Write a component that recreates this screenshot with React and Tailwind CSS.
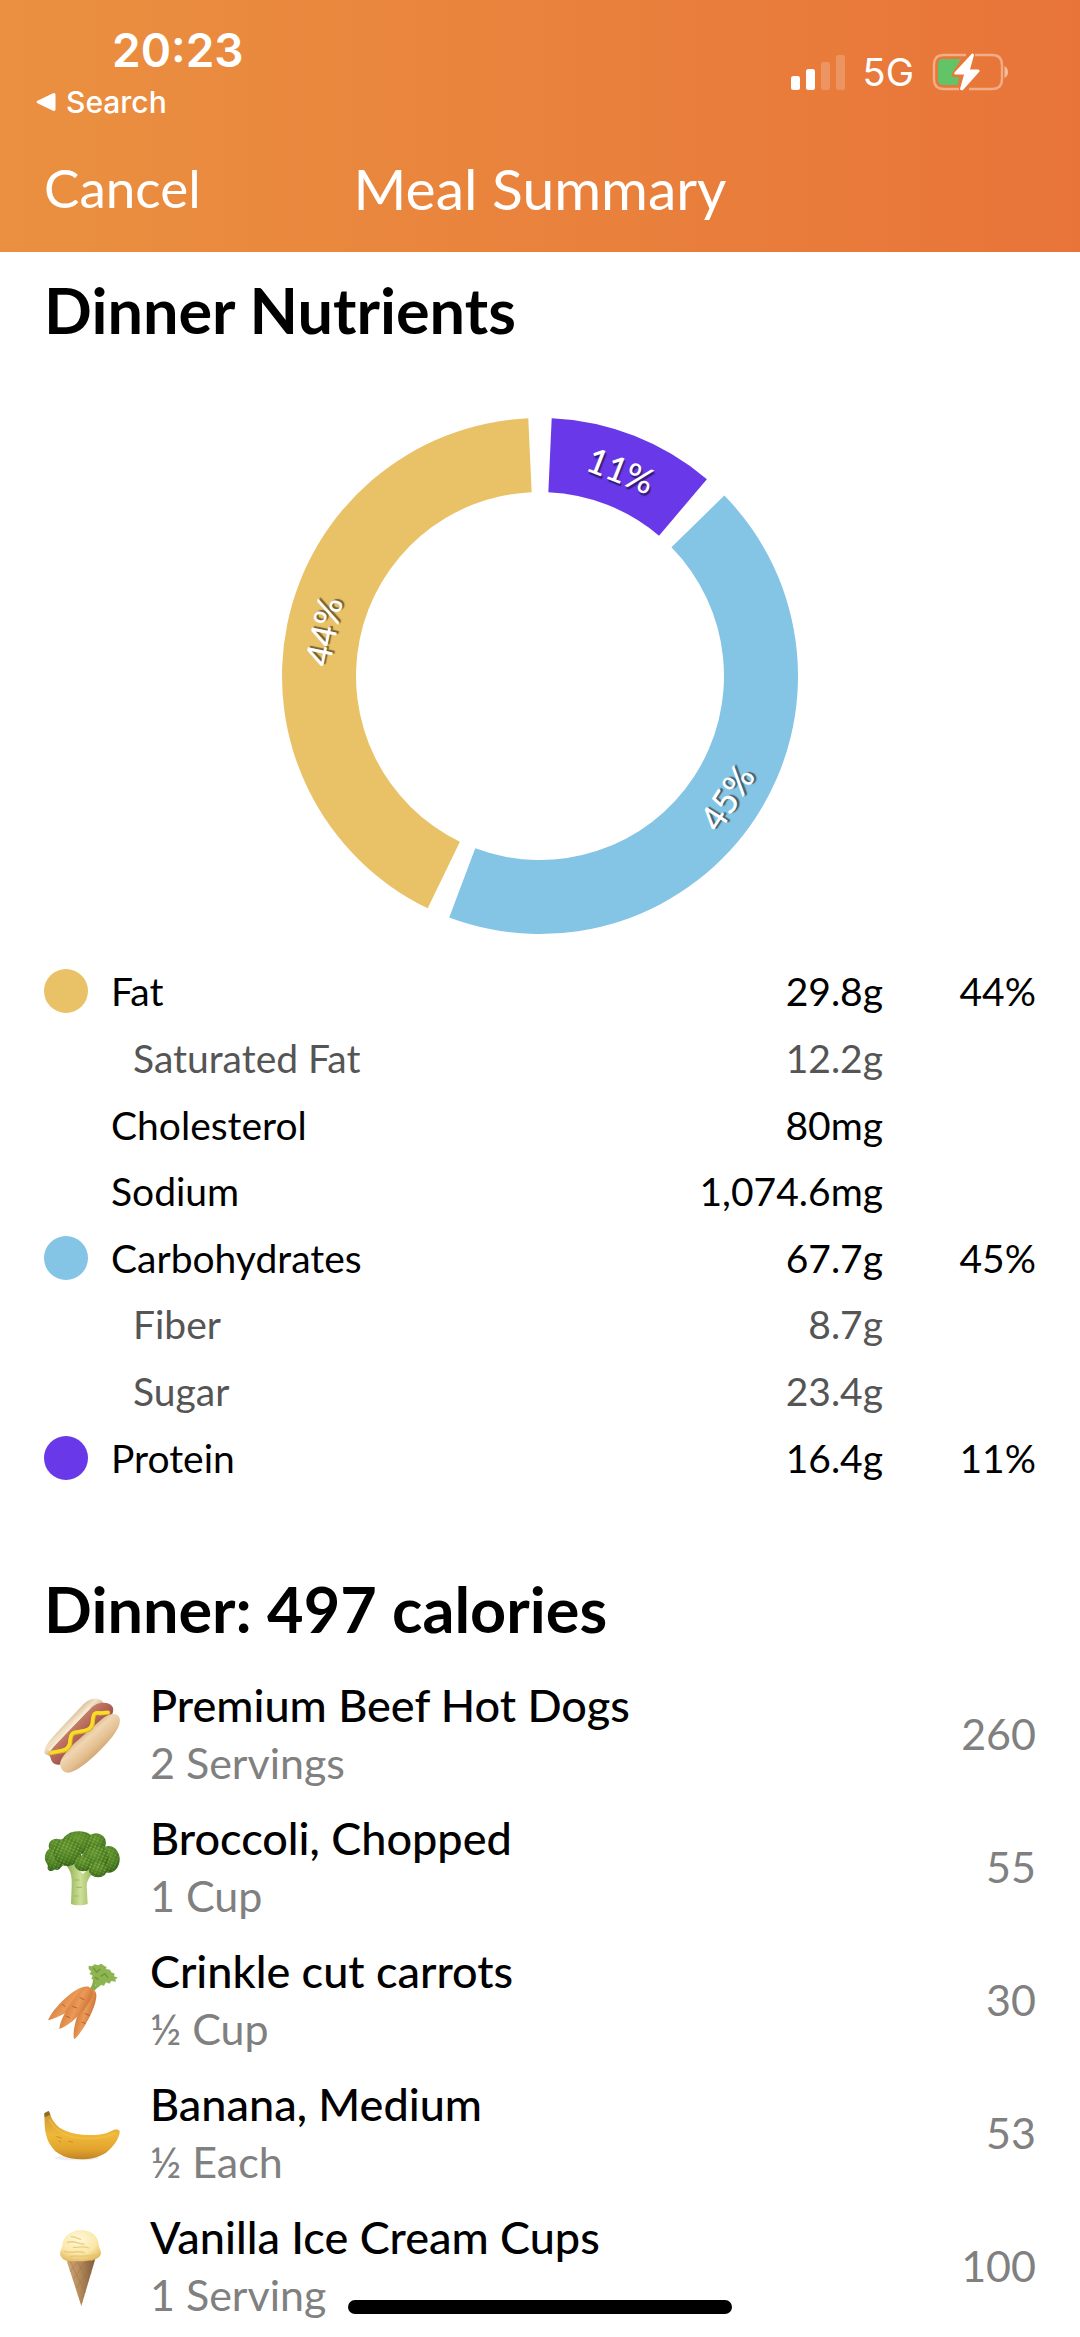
import clsx from 'clsx';

const NUTRIENTS = [
  { name: 'Fat', amount: '29.8g', percent: '44%', dot: 'bg-[#e9c267]' },
  { name: 'Saturated Fat', amount: '12.2g', sub: true },
  { name: 'Cholesterol', amount: '80mg' },
  { name: 'Sodium', amount: '1,074.6mg' },
  { name: 'Carbohydrates', amount: '67.7g', percent: '45%', dot: 'bg-[#84c4e5]' },
  { name: 'Fiber', amount: '8.7g', sub: true },
  { name: 'Sugar', amount: '23.4g', sub: true },
  { name: 'Protein', amount: '16.4g', percent: '11%', dot: 'bg-[#6938e8]' },
];

// Angles are in degrees, clockwise from the top
const SLICES = [
  { label: '11%', from: 2.6, to: 40.3, color: '#6938e8', rotate: 21.5 },
  { label: '45%', from: 45.6, to: 200.6, color: '#84c4e5', rotate: -57 },
  { label: '44%', from: 205.8, to: 357.4, color: '#e9c267', rotate: -78.5 },
];

const OUTER = 258;
const INNER = 184;

const point = (angle, r) => {
  const rad = (angle * Math.PI) / 180;
  return [r * Math.sin(rad), -r * Math.cos(rad)];
};

const slicePath = (from, to) => {
  const large = to - from > 180 ? 1 : 0;
  return `M${point(from, OUTER)}A${OUTER} ${OUTER} 0 ${large} 1 ${point(to, OUTER)}L${point(to, INNER)}A${INNER} ${INNER} 0 ${large} 0 ${point(from, INNER)}Z`;
};

function NutrientChart() {
  return (
    <svg viewBox="-260 -260 520 520" className="w-[520px] mx-auto mt-19" role="img" aria-label="Nutrient breakdown">
      {SLICES.map(({ label, from, to, color, rotate }) => {
        const [x, y] = point((from + to) / 2, 222);
        return (
          <g key={label}>
            <path d={slicePath(from, to)} fill={color} />
            <g transform={`translate(${x} ${y})`}>
              <text
                transform={`rotate(${rotate})`}
                textAnchor="middle"
                dominantBaseline="central"
                className="fill-white text-[35px] font-medium [text-shadow:2px_2px_1px_rgba(0,0,0,0.5)]"
              >
                {label}
              </text>
            </g>
          </g>
        );
      })}
    </svg>
  );
}

function HotDog() {
  return (
    <svg viewBox="42 55 228 228" className="size-[76px]" aria-hidden="true">
      <defs>
        <linearGradient id="bunBack" x1="0" y1="0" x2="1" y2="1">
          <stop offset="0.3" stopColor="#c9a77d" />
          <stop offset="0.42" stopColor="#f3e3c8" />
          <stop offset="0.55" stopColor="#c99b6b" />
        </linearGradient>
        <linearGradient id="bunFront" x1="0.25" y1="0.25" x2="0.75" y2="0.8">
          <stop offset="0" stopColor="#c08b58" />
          <stop offset="0.35" stopColor="#efd6b2" />
          <stop offset="0.6" stopColor="#e4bf90" />
          <stop offset="1" stopColor="#b98552" />
        </linearGradient>
        <linearGradient id="sausage" x1="0.3" y1="0.3" x2="0.7" y2="0.7">
          <stop offset="0" stopColor="#d08a70" />
          <stop offset="1" stopColor="#8e3b3c" />
        </linearGradient>
      </defs>
      <path d="M44 222C38 205 60 180 88 150L160 74C178 56 200 54 214 62L232 84L80 240Z" fill="url(#bunBack)" />
      <path d="M62 236C56 222 64 208 80 190L184 84C200 68 236 62 248 82C254 96 244 112 230 124L98 250C86 260 66 256 62 236Z" fill="url(#sausage)" />
      <path d="M58 210L178 84" stroke="#f6ead2" strokeWidth="7" strokeLinecap="round" />
      <path d="M92 262C84 246 104 222 130 194L216 118C238 98 264 98 269 116C274 140 250 170 222 200C190 234 150 270 122 278C106 282 96 274 92 262Z" fill="url(#bunFront)" />
      <path d="M64 220C92 212 110 220 120 194C122 168 124 158 144 158C164 154 184 154 188 132C190 100 194 98 210 101L234 99" fill="none" stroke="#e0b41a" strokeWidth="13" strokeLinecap="round" strokeLinejoin="round" />
      <path d="M64 219C92 210 110 218 119 192C121 166 124 156 144 156C164 152 183 152 187 130C189 99 194 97 210 100L234 98" fill="none" stroke="#f8dc2c" strokeWidth="10" strokeLinecap="round" strokeLinejoin="round" />
    </svg>
  );
}

function Broccoli() {
  return (
    <svg viewBox="42 63 228 228" className="size-[76px]" aria-hidden="true">
      <defs>
        <linearGradient id="stem">
          <stop offset="0" stopColor="#84a946" />
          <stop offset="0.5" stopColor="#cfdf98" />
          <stop offset="1" stopColor="#8db04f" />
        </linearGradient>
        <radialGradient id="floret" cx="0.45" cy="0.3" r="0.7">
          <stop offset="0" stopColor="#6b9b35" />
          <stop offset="0.65" stopColor="#4c8023" />
          <stop offset="1" stopColor="#335f17" />
        </radialGradient>
        <pattern id="buds" width="11" height="9" patternUnits="userSpaceOnUse" patternTransform="rotate(24)">
          <circle cx="3" cy="2" r="1.9" fill="#86b049" />
          <circle cx="8" cy="6" r="1.5" fill="#3d6d1b" />
        </pattern>
      </defs>
      <path d="M106 164C124 182 126 200 125 230L123 282C134 287 160 287 173 282L170 226C172 206 184 194 196 182L176 176L158 192L140 166Z" fill="url(#stem)" />
      <path d="M132 210h16M138 232h18M132 258h14" stroke="#9cb765" strokeWidth="3" />
      {['url(#floret)', 'url(#buds)'].map(fill => (
        <g key={fill} fill={fill}>
          <ellipse cx="80" cy="108" rx="24" ry="22" />
          <path d="M45 150C42 122 62 108 84 112L104 160C92 172 86 186 74 178C66 188 48 182 54 168Z" />
          <ellipse cx="146" cy="98" rx="50" ry="34" />
          <ellipse cx="198" cy="98" rx="30" ry="28" />
          <ellipse cx="112" cy="126" rx="42" ry="42" />
          <ellipse cx="236" cy="148" rx="33" ry="40" />
          <ellipse cx="196" cy="142" rx="40" ry="36" />
          <ellipse cx="160" cy="160" rx="28" ry="24" />
          <ellipse cx="204" cy="178" rx="28" ry="24" />
        </g>
      ))}
    </svg>
  );
}

function Carrots() {
  return (
    <svg viewBox="42 57 228 228" className="size-[76px]" aria-hidden="true">
      <defs>
        <linearGradient id="carrot" x1="0" y1="0.2" x2="1" y2="0.8">
          <stop offset="0.1" stopColor="#c66f32" />
          <stop offset="0.5" stopColor="#ec9a57" />
          <stop offset="0.9" stopColor="#b85d24" />
        </linearGradient>
      </defs>
      <path d="M186 130C194 112 204 98 220 78M192 132C206 116 222 106 240 100M188 128C194 112 196 100 196 78" fill="none" stroke="#84ad4b" strokeWidth="9" strokeLinecap="round" />
      <path d="M176 62l10 2 8-6 10 3 10-5 8 6 8 4-2 6 12 2 4 8 10 4-2 8 12 4-8 5 2 7-14-2-6 8-10-4-6 10-10-2-8 8-8-10-2-12-10-4 4-10-10-6 6-6-8-8Z" fill="#8fb552" />
      <path d="M190 68l10 14 10-10M212 94l12-8 10 12M194 96l12 8" fill="none" stroke="#6d963a" strokeWidth="4" />
      <path d="M178 126C158 120 130 138 106 160C84 180 62 206 54 226C70 224 106 206 130 190L172 158Z" fill="url(#carrot)" />
      <path d="M186 132C196 134 202 146 198 162C194 188 176 224 158 252C148 268 136 282 132 282C128 266 134 234 144 208Z" fill="url(#carrot)" />
      <path d="M182 128C196 134 188 156 176 174C158 204 120 240 88 252C88 236 104 200 124 174C144 148 164 126 182 128Z" fill="url(#carrot)" />
      <path d="M150 158l12 6M128 184l12 5M166 206l12 5M156 232l9 3M98 178l7 7M110 214l9 4" stroke="#b65f29" strokeWidth="3" strokeLinecap="round" />
    </svg>
  );
}

function Banana() {
  return (
    <svg viewBox="42 51 228 228" className="size-[76px]" aria-hidden="true">
      <defs>
        <linearGradient id="banana" x1="0" y1="0" x2="0" y2="1">
          <stop offset="0" stopColor="#c89431" />
          <stop offset="0.5" stopColor="#efb83a" />
          <stop offset="0.8" stopColor="#e2a42e" />
          <stop offset="1" stopColor="#c08323" />
        </linearGradient>
      </defs>
      <ellipse cx="140" cy="234" rx="66" ry="7" fill="#eeeeee" />
      <path d="M43 100L56 93C62 104 62 112 72 126C90 152 126 164 176 165C210 166 234 160 250 150C258 148 268 148 269 154C270 172 252 200 228 218C196 240 138 244 100 228C64 214 46 178 44 136Z" fill="url(#banana)" />
      <path d="M58 118C76 154 116 176 176 176C214 176 240 168 258 158" fill="none" stroke="#f3c54c" strokeWidth="6" opacity="0.5" />
      <path d="M43 100L56 93L61 104L44 112Z" fill="#8f6a2a" />
      <path d="M80 170l14 4M116 184l12 2M86 182l6 5" stroke="#c98f28" strokeWidth="3" strokeLinecap="round" />
    </svg>
  );
}

function IceCream() {
  return (
    <svg viewBox="42 60 228 228" className="size-[76px]" aria-hidden="true">
      <defs>
        <radialGradient id="scoop" cx="0.45" cy="0.3" r="0.75">
          <stop offset="0" stopColor="#fff8dc" />
          <stop offset="0.6" stopColor="#fae8a8" />
          <stop offset="1" stopColor="#e2b65c" />
        </radialGradient>
        <linearGradient id="cone">
          <stop offset="0" stopColor="#d0aa78" />
          <stop offset="0.45" stopColor="#b68c5c" />
          <stop offset="1" stopColor="#7d5a38" />
        </linearGradient>
      </defs>
      <path d="M108 146L196 146L154 288Z" fill="url(#cone)" />
      <path d="M120 152l46 96M142 152l32 64M164 152l20 38M190 156l-50 78M168 152l-38 56M144 152l-24 34" stroke="#96704a" strokeWidth="2" opacity="0.6" />
      <path d="M92 138C86 124 98 118 97 102C102 76 126 60 154 60C184 60 206 80 206 104C208 118 218 126 210 138C202 148 194 148 186 152C172 150 162 156 150 154C136 152 124 156 112 152C102 152 96 146 92 138Z" fill="url(#scoop)" />
      <path d="M124 80c12 0 18 6 28 8M112 98c20-10 30 6 50 4M130 112c16 2 30-6 46 2M104 124c18 8 40-4 58 4M120 140c20-6 46 4 76-6" fill="none" stroke="#e6c46c" strokeWidth="4" strokeLinecap="round" opacity="0.8" />
    </svg>
  );
}

const FOODS = [
  { name: 'Premium Beef Hot Dogs', serving: '2 Servings', calories: 260, Icon: HotDog },
  { name: 'Broccoli, Chopped', serving: '1 Cup', calories: 55, Icon: Broccoli },
  { name: 'Crinkle cut carrots', serving: '½ Cup', calories: 30, Icon: Carrots },
  { name: 'Banana, Medium', serving: '½ Each', calories: 53, Icon: Banana },
  { name: 'Vanilla Ice Cream Cups', serving: '1 Serving', calories: 100, Icon: IceCream },
];

function StatusBar() {
  return (
    <div className="flex items-center justify-between pt-5 pl-9 pr-[72px] font-[Inter,sans-serif]">
      <div>
        <p className="pl-[76px] text-[46px] leading-[60px] font-semibold">20:23</p>
        <a href="#search" className="mt-1 flex items-center gap-[10px] text-[30px] leading-9 font-medium">
          <svg viewBox="0 0 20 20" className="size-5" fill="currentColor" aria-hidden="true">
            <path d="M1.5 8.8L17 1.2Q19.5 0.5 19.5 3V17Q19.5 19.5 17 18.8L1.5 11.2Q-0.5 10 1.5 8.8Z" />
          </svg>
          Search
        </a>
      </div>
      <div className="flex items-center pt-1">
        <svg viewBox="0 0 54 35" className="h-[35px] w-[54px]" fill="#fff" aria-hidden="true">
          <rect x="0" y="21" width="9" height="14" rx="2.5" />
          <rect x="15" y="14" width="9" height="21" rx="2.5" />
          <rect x="30" y="7" width="9" height="28" rx="2.5" opacity="0.2" />
          <rect x="45" y="0" width="9" height="35" rx="2.5" opacity="0.2" />
        </svg>
        <span className="ml-[18px] text-[38px] leading-10">5G</span>
        <svg viewBox="0 0 76 38" className="ml-[18px] h-[38px] w-[76px]" aria-hidden="true">
          <path d="M34 2H12Q2 2 2 12V26Q2 36 12 36H27M43 2H60Q70 2 70 12V26Q70 36 60 36H37" fill="none" stroke="#fff" strokeOpacity="0.4" strokeWidth="2.4" />
          <path d="M72.5 13Q76 15 76 19T72.5 25Z" fill="#fff" opacity="0.5" />
          <path d="M11 6H29L20 21Q19 24 22 24H27L26 32H11Q6 32 6 27V11Q6 6 11 6Z" fill="#62c466" />
          <path d="M40 0.5L22.5 19.5Q21.5 21.5 24 21.5H32L28 36Q28.5 38 31 37L47.5 18.5Q48 16.5 46 16.5H38L42 2Q42 0 40 0.5Z" fill="#fff" />
        </svg>
      </div>
    </div>
  );
}

export default function App() {
  return (
    <div className="relative min-h-screen bg-white text-black font-[Lato,sans-serif]">
      <header className="bg-linear-to-r from-[#ea9040] to-[#e87439] text-white">
        <StatusBar />
        <nav className="grid h-33 grid-cols-[1fr_auto_1fr] items-center px-11 pt-1">
          <button type="button" className="justify-self-start text-[53px] leading-16">Cancel</button>
          <h1 className="text-[57px] leading-16">Meal Summary</h1>
        </nav>
      </header>

      <main className="px-11">
        <section className="pt-7">
          <h2 className="text-[63px] leading-[60px] font-bold">Dinner Nutrients</h2>
          <NutrientChart />
          <table className="mt-[22px] h-[533px] w-full text-[39px] leading-12">
            <tbody>
              {NUTRIENTS.map(({ name, amount, percent, dot, sub }) => (
                <tr key={name} className={clsx(sub && 'text-[#555]')}>
                  <td className="w-[67px] p-0">{dot && <div className={clsx('size-11 rounded-full', dot)} />}</td>
                  <th scope="row" className={clsx('p-0 text-left font-normal', sub && 'pl-[22px]')}>{name}</th>
                  <td className="p-0 text-right">{amount}</td>
                  <td className="w-[153px] p-0 text-right">{percent}</td>
                </tr>
              ))}
            </tbody>
          </table>
        </section>

        <section className="pt-[88px]">
          <h2 className="text-[63px] leading-[60px] font-bold">Dinner: 497 calories</h2>
          <ul className="mt-[30px]">
            {FOODS.map(({ name, serving, calories, Icon }) => (
              <li key={name} className="flex h-[133px] items-center text-[43px] leading-[57px]">
                <Icon />
                <div className="ml-[30px] flex-1 pb-1">
                  <p className="text-[45px] font-medium">{name}</p>
                  <p className="text-[#808080]">{serving}</p>
                </div>
                <span className="pb-1 text-[#808080]">{calories}</span>
              </li>
            ))}
          </ul>
        </section>
      </main>

      {/* Home indicator */}
      <div className="absolute bottom-[23px] left-1/2 h-[14px] w-96 -translate-x-1/2 rounded-full bg-black" />
    </div>
  );
}
